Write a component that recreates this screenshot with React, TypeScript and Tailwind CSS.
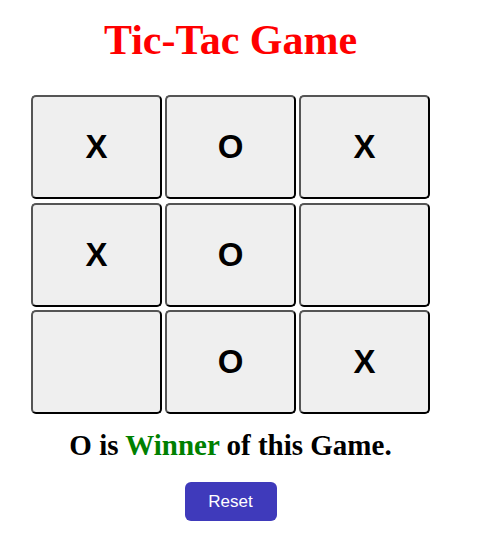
import { useState } from "react";

type Cell = "X" | "O" | "";

const initial: Cell[] = ["X", "O", "X", "X", "O", "", "", "O", "X"];

export default function App() {
    const [cells, setCells] = useState<Cell[]>(initial);

    return (
        <div className="w-[461px] flex flex-col items-center bg-white">
            {/* title */}
            <h1 className="mt-[16px] text-[42px] leading-[48px] font-bold text-[#ff0000] font-['Liberation_Serif',serif]">
                Tic-Tac Game
            </h1>

            {/* board */}
            <div className="mt-[31px] grid grid-cols-[131px_131px_131px] grid-rows-[104px_104px_104px] gap-x-[3px] gap-y-[3.5px]">
                {cells.map((c, i) => (
                    <button
                        key={i}
                        className="bg-[#efefef] rounded-[5px] border-2 border-t-[#555] border-l-[#555] border-b-black border-r-black text-[33px] font-bold text-black font-['Liberation_Sans',Arial,sans-serif]"
                    >
                        {c}
                    </button>
                ))}
            </div>

            {/* status */}
            <p className="mt-[15px] text-[29px] leading-[32px] font-bold text-black font-['Liberation_Serif',serif]">
                O is <span className="text-[#008000]">Winner</span> of this Game.
            </p>

            <button
                onClick={() => setCells(Array(9).fill(""))}
                className="mt-[21px] w-[92px] h-[39px] rounded-[6px] bg-[#3f3abb] text-white text-[17px] font-['Liberation_Sans',Arial,sans-serif]"
            >
                Reset
            </button>
        </div>
    );
}
